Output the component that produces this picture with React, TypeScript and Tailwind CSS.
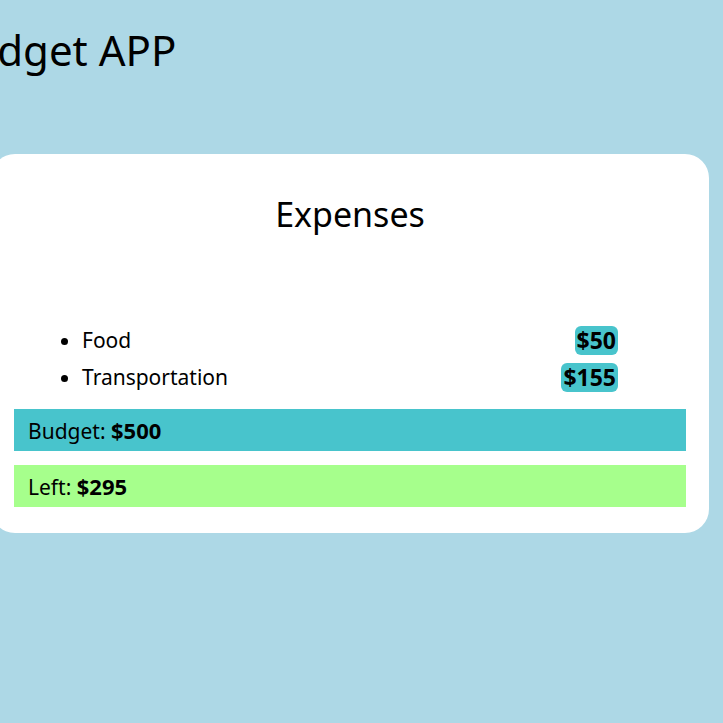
import React from "react";

const font = { fontFamily: "'Noto Sans', 'Open Sans', sans-serif" };

export default function App() {
  const items = [
    { name: "Food", amount: 50 },
    { name: "Transportation", amount: 155 },
  ];
  return (
    <div className="min-h-screen w-full overflow-hidden bg-[#add8e6] text-black" style={font}>
      <h1 className="ml-[-56px] pt-[22px] text-[42px] leading-[56px] font-normal whitespace-nowrap">Budget APP</h1>
      <div className="mt-[76px] ml-[-9px] w-[718px] rounded-[24px] bg-white px-[23px] pt-[36px] pb-[26px]">
        <h2 className="text-center text-[34px] leading-[48px] font-normal">Expenses</h2>
        <ul className="mt-[84px] list-disc pl-[68px] pr-[68px]">
          {items.map((it) => (
            <li key={it.name} className="h-[37px] text-[21px]">
              <div className="flex h-[37px] items-center justify-between">
                <span>{it.name}</span>
                <span className="rounded-[6px] bg-[#48c4cc] px-[2px] text-[23px] font-bold leading-[29px]">${it.amount}</span>
              </div>
            </li>
          ))}
        </ul>
        <div className="mt-[13px] flex h-[42px] items-center bg-[#48c4cc] px-[14px] text-[21px]">
          <span className="leading-[28px]">
            Budget: <b className="text-[22px] font-bold">$500</b>
          </span>
        </div>
        <div className="mt-[14px] flex h-[42px] items-center bg-[#a6ff8c] px-[14px] text-[21px]">
          <span className="leading-[28px]">
            Left: <b className="text-[22px] font-bold">$295</b>
          </span>
        </div>
      </div>
    </div>
  );
}
